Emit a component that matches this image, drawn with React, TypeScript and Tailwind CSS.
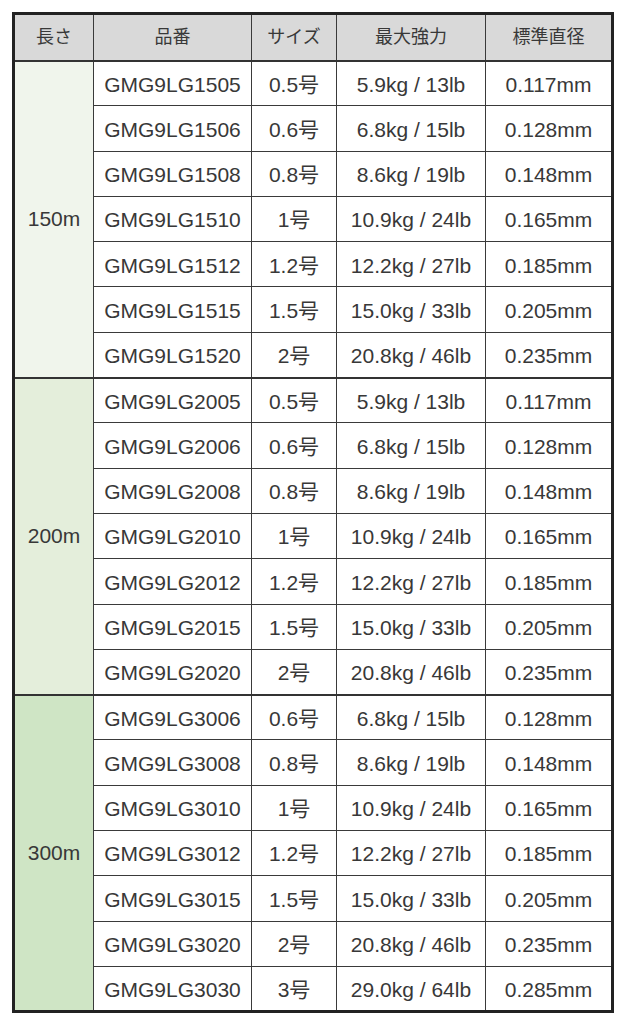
import React from "react";

type Row = [string, string, string, string];

const groups: { len: string; bg: string; rows: Row[] }[] = [
  {
    len: "150m",
    bg: "bg-[#f0f5ec]",
    rows: [
      ["GMG9LG1505", "0.5号", "5.9kg / 13lb", "0.117mm"],
      ["GMG9LG1506", "0.6号", "6.8kg / 15lb", "0.128mm"],
      ["GMG9LG1508", "0.8号", "8.6kg / 19lb", "0.148mm"],
      ["GMG9LG1510", "1号", "10.9kg / 24lb", "0.165mm"],
      ["GMG9LG1512", "1.2号", "12.2kg / 27lb", "0.185mm"],
      ["GMG9LG1515", "1.5号", "15.0kg / 33lb", "0.205mm"],
      ["GMG9LG1520", "2号", "20.8kg / 46lb", "0.235mm"],
    ],
  },
  {
    len: "200m",
    bg: "bg-[#e4eedb]",
    rows: [
      ["GMG9LG2005", "0.5号", "5.9kg / 13lb", "0.117mm"],
      ["GMG9LG2006", "0.6号", "6.8kg / 15lb", "0.128mm"],
      ["GMG9LG2008", "0.8号", "8.6kg / 19lb", "0.148mm"],
      ["GMG9LG2010", "1号", "10.9kg / 24lb", "0.165mm"],
      ["GMG9LG2012", "1.2号", "12.2kg / 27lb", "0.185mm"],
      ["GMG9LG2015", "1.5号", "15.0kg / 33lb", "0.205mm"],
      ["GMG9LG2020", "2号", "20.8kg / 46lb", "0.235mm"],
    ],
  },
  {
    len: "300m",
    bg: "bg-[#cfe5c5]",
    rows: [
      ["GMG9LG3006", "0.6号", "6.8kg / 15lb", "0.128mm"],
      ["GMG9LG3008", "0.8号", "8.6kg / 19lb", "0.148mm"],
      ["GMG9LG3010", "1号", "10.9kg / 24lb", "0.165mm"],
      ["GMG9LG3012", "1.2号", "12.2kg / 27lb", "0.185mm"],
      ["GMG9LG3015", "1.5号", "15.0kg / 33lb", "0.205mm"],
      ["GMG9LG3020", "2号", "20.8kg / 46lb", "0.235mm"],
      ["GMG9LG3030", "3号", "29.0kg / 64lb", "0.285mm"],
    ],
  },
];

const cell = "border border-[#3a3a3a] text-center align-middle p-0";

export default function App() {
  return (
    <div
      className="w-[623px] h-[1024px] bg-white pt-[12px] pl-[12px] text-[#383838] text-[21px]"
      style={{ fontFamily: '"Liberation Sans", "Noto Sans CJK JP", sans-serif' }}
    >
      <table className="table-fixed border-collapse border-[3px] border-[#222] w-[599px]">
        <colgroup>
          <col className="w-[80px]" />
          <col className="w-[158px]" />
          <col className="w-[85px]" />
          <col className="w-[149px]" />
          <col className="w-[127px]" />
        </colgroup>
        <thead>
          <tr className="h-[47px] bg-[#d9d9d9] text-[18px]">
            <th className={`${cell} font-normal`}>長さ</th>
            <th className={`${cell} font-normal`}>品番</th>
            <th className={`${cell} font-normal`}>サイズ</th>
            <th className={`${cell} font-normal`}>最大強力</th>
            <th className={`${cell} font-normal`}>標準直径</th>
          </tr>
        </thead>
        <tbody>
          {groups.map((g) =>
            g.rows.map((r, i) => (
              <tr key={r[0]} className="h-[45.3px]">
                {i === 0 && (
                  <td rowSpan={g.rows.length} className={`${cell} ${g.bg} border-t-2 border-t-[#333]`}>
                    {g.len}
                  </td>
                )}
                {r.map((v, j) => (
                  <td key={j} className={`${cell} bg-white pt-[2px] ${i === 0 ? "border-t-2 border-t-[#333]" : ""}`}>
                    {v}
                  </td>
                ))}
              </tr>
            ))
          )}
        </tbody>
      </table>
    </div>
  );
}
